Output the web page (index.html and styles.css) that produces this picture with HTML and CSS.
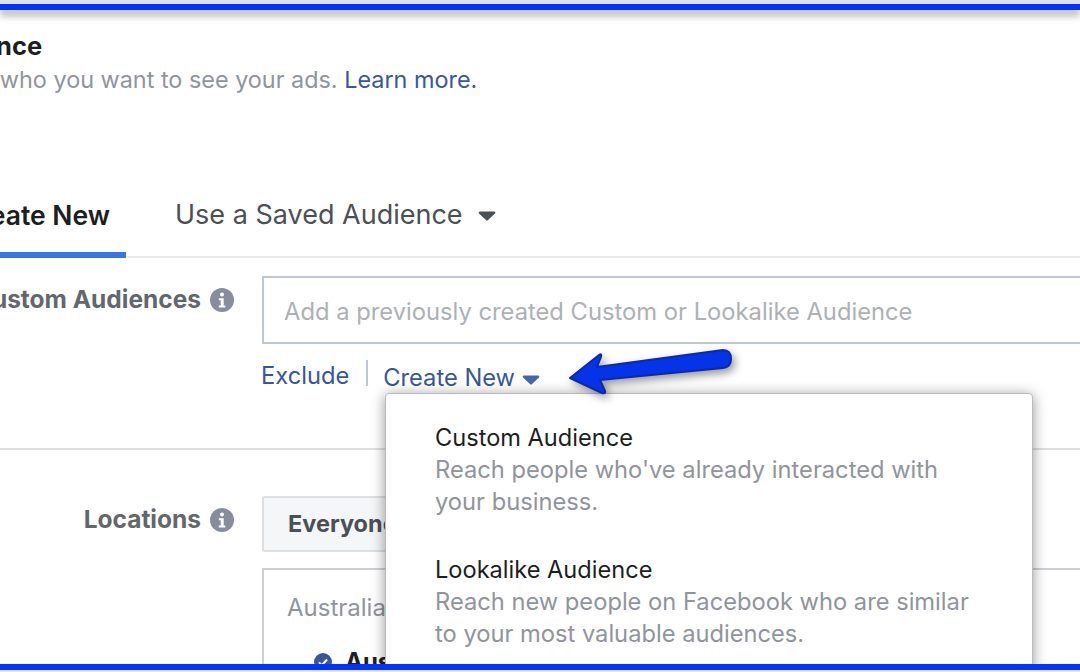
FILE: index.html
```html
<!DOCTYPE html>
<html lang="en">
<head>
<meta charset="utf-8">
<title>Audience</title>
<link rel="stylesheet" href="styles.css">
</head>
<body>
<div class="page">
  <div class="frame-top"></div>
  <header class="head">
    <h1 class="title">Audience</h1>
    <p class="sub">Define who you want to see your ads. <a class="link">Learn more.</a></p>
  </header>
  <nav class="tabs">
    <div class="tab active">Create New</div>
    <div class="tab saved">Use a Saved Audience <svg class="caret dark" viewBox="0 0 18 10"><path d="M2 .5H16Q18 .5 17 2.500L10 9Q9 10 8 9L1 2.500Q0 .5 2 .5Z"/></svg></div>
  </nav>
  <section class="row custom">
    <div class="label"><span class="label-text">Custom Audiences</span>
      <svg class="info" viewBox="0 0 24 24"><circle cx="12" cy="12" r="12" fill="#878d9c"/><circle cx="12" cy="6.6" r="2" fill="#fff"/><path d="M8.8 10.2h4.9v7.4h1.6v2H8.800v-2h1.900v-5.400H8.800z" fill="#fff"/></svg>
    </div>
    <div class="field">
      <div class="input">Add a previously created Custom or Lookalike Audience</div>
      <div class="actions">
        <a class="link exclude">Exclude</a>
        <a class="link create">Create New <svg class="caret blue" viewBox="0 0 18 10"><path d="M2 .5H16Q18 .5 17 2.500L10 9Q9 10 8 9L1 2.500Q0 .5 2 .5Z"/></svg></a>
      </div>
    </div>
  </section>
  <section class="row locations">
    <div class="label"><span class="label-text">Locations</span>
      <svg class="info" viewBox="0 0 24 24"><circle cx="12" cy="12" r="12" fill="#878d9c"/><circle cx="12" cy="6.6" r="2" fill="#fff"/><path d="M8.8 10.2h4.9v7.4h1.6v2H8.800v-2h1.900v-5.400H8.800z" fill="#fff"/></svg>
    </div>
    <div class="field">
      <div class="select">Everyone in this location</div>
      <div class="locbox">
        <div class="country">Australia</div>
        <div class="chosen">
          <svg class="check" viewBox="0 0 18 18"><circle cx="9" cy="9" r="9" fill="#365899"/><path d="M5 9.400l2.800 2.800L13 6.500" fill="none" stroke="#fff" stroke-width="2"/></svg>
          <span>Australia</span>
        </div>
      </div>
    </div>
  </section>

  <div class="menu">
    <div class="item">
      <div class="item-title">Custom Audience</div>
      <div class="item-desc">Reach people who've already interacted with your business.</div>
    </div>
    <div class="item">
      <div class="item-title">Lookalike Audience</div>
      <div class="item-desc">Reach new people on Facebook who are similar to your most valuable audiences.</div>
    </div>
  </div>

  <svg class="arrow" viewBox="0 0 170 54">
    <path d="M2 31 L31 8 Q34 6 33 10 L29 20 L155 3 Q163 3 163 12 Q163 20 155 21 L32 33 L37 44 Q38 47 34 46 Z" fill="#0433e8" stroke="#0b2aa8" stroke-width="2" stroke-linejoin="round"/>
  </svg>

  <div class="frame-bottom"></div>
</div>
</body>
</html>
```
FILE: styles.css
```css
* { box-sizing: border-box; }
html, body { margin: 0; padding: 0; }
body { background: #fff; font-family: Inter, "Liberation Sans", sans-serif; }
.page { position: relative; width: 1080px; height: 672px; overflow: hidden; background: #fff; }

.frame-top { height: 10px; border-top: 4px solid #dfe2ee; background: #0433ff; box-shadow: 0 7px 6px 0 #c6c6c6; }
.frame-bottom { position: absolute; left: 0; right: 0; top: 664px; height: 8px; background: #e6e6e6; border-top: 6px solid #0433ff; }

.head { padding-top: 21px; }
.title { margin: 0 0 0 -77px; font-size: 25.5px; line-height: 30px; font-weight: 700; color: #1c1e21; }
.sub { margin: 4px 0 0 -79px; font-size: 23.4px; line-height: 30px; color: #90949c; white-space: nowrap; }
.link { color: #365899; }

.tabs { display: flex; margin-top: 100px; height: 63px; border-bottom: 2px solid #e9ebee; }
.tab { font-size: 27px; line-height: 34px; padding-top: 3px; white-space: nowrap; }
.tab.active { width: 126px; height: 63px; border-bottom: 6px solid #3578e5; color: #1c1e21; font-size: 26.5px; font-weight: 600; display: flex; justify-content: flex-end; padding-right: 16px; }
.tab.saved { margin-left: 49px; color: #4b4f56; }

.caret { display: inline-block; width: 18px; height: 10px; vertical-align: middle; margin-left: 8px; margin-top: -2px; }
.caret.dark { fill: #4b4f56; }
.caret.blue { fill: #4267b2; margin-left: 0; margin-top: 1px; }

.row { display: flex; }
.label { width: 262px; flex: none; display: flex; justify-content: flex-end; align-items: flex-start; padding-top: 8px; padding-right: 28px; white-space: nowrap; }
.label-text { font-size: 24.5px; line-height: 30px; font-weight: 700; color: #63676c; }
.info { width: 24px; height: 24px; margin-left: 9px; margin-top: 4px; flex: none; }
.field { flex: 1; min-width: 0; }

.custom { margin-top: 18px; height: 174px; border-bottom: 2px solid #dddfe2; }
.input { height: 68px; border: 2px solid #bdc7d8; border-right: 0; padding: 0 20px; font-size: 23.75px; line-height: 67px; color: #adb0b5; white-space: nowrap; }
.actions { display: flex; align-items: flex-start; margin-top: 17px; margin-left: -1px; font-size: 23.7px; line-height: 30px; white-space: nowrap; }
.exclude { padding-right: 17px; }
.create { border-left: 2px solid #bdc7d8; height: 26px; margin-top: -1px; padding-left: 15px; line-height: 36px; }

.locations { margin-top: 46px; }
.select { width: 400px; height: 56px; border: 2px solid #dddfe2; border-radius: 3px; background: #f5f6f7; padding-left: 24px; font-size: 23.5px; line-height: 52px; font-weight: 700; color: #4b4f56; white-space: nowrap; }
.locbox { margin-top: 16px; width: 900px; height: 200px; border: 2px solid #ccd0d5; padding: 23px 23px; }
.country { font-size: 24px; line-height: 30px; color: #90949c; }
.chosen { display: flex; align-items: center; gap: 13px; margin: 25px 0 0 27px; font-size: 24px; line-height: 28px; font-weight: 700; color: #1c1e21; }
.check { width: 18px; height: 18px; }

.menu { position: absolute; left: 385px; top: 393px; width: 648px; height: 400px; background: #fff; border: 1px solid #bbb; border-radius: 4px; box-shadow: 0 2px 14px rgba(0,0,0,.42); padding: 28px 49px; }
.item { margin-bottom: 36px; }
.item-title { font-size: 23.6px; line-height: 32px; color: #1c1e21; }
.item-desc { font-size: 23.7px; line-height: 32px; color: #90949c; }

.arrow { position: absolute; left: 568px; top: 347px; width: 170px; height: 54px; filter: drop-shadow(3px 4px 4px rgba(0,0,0,.4)); }
```
